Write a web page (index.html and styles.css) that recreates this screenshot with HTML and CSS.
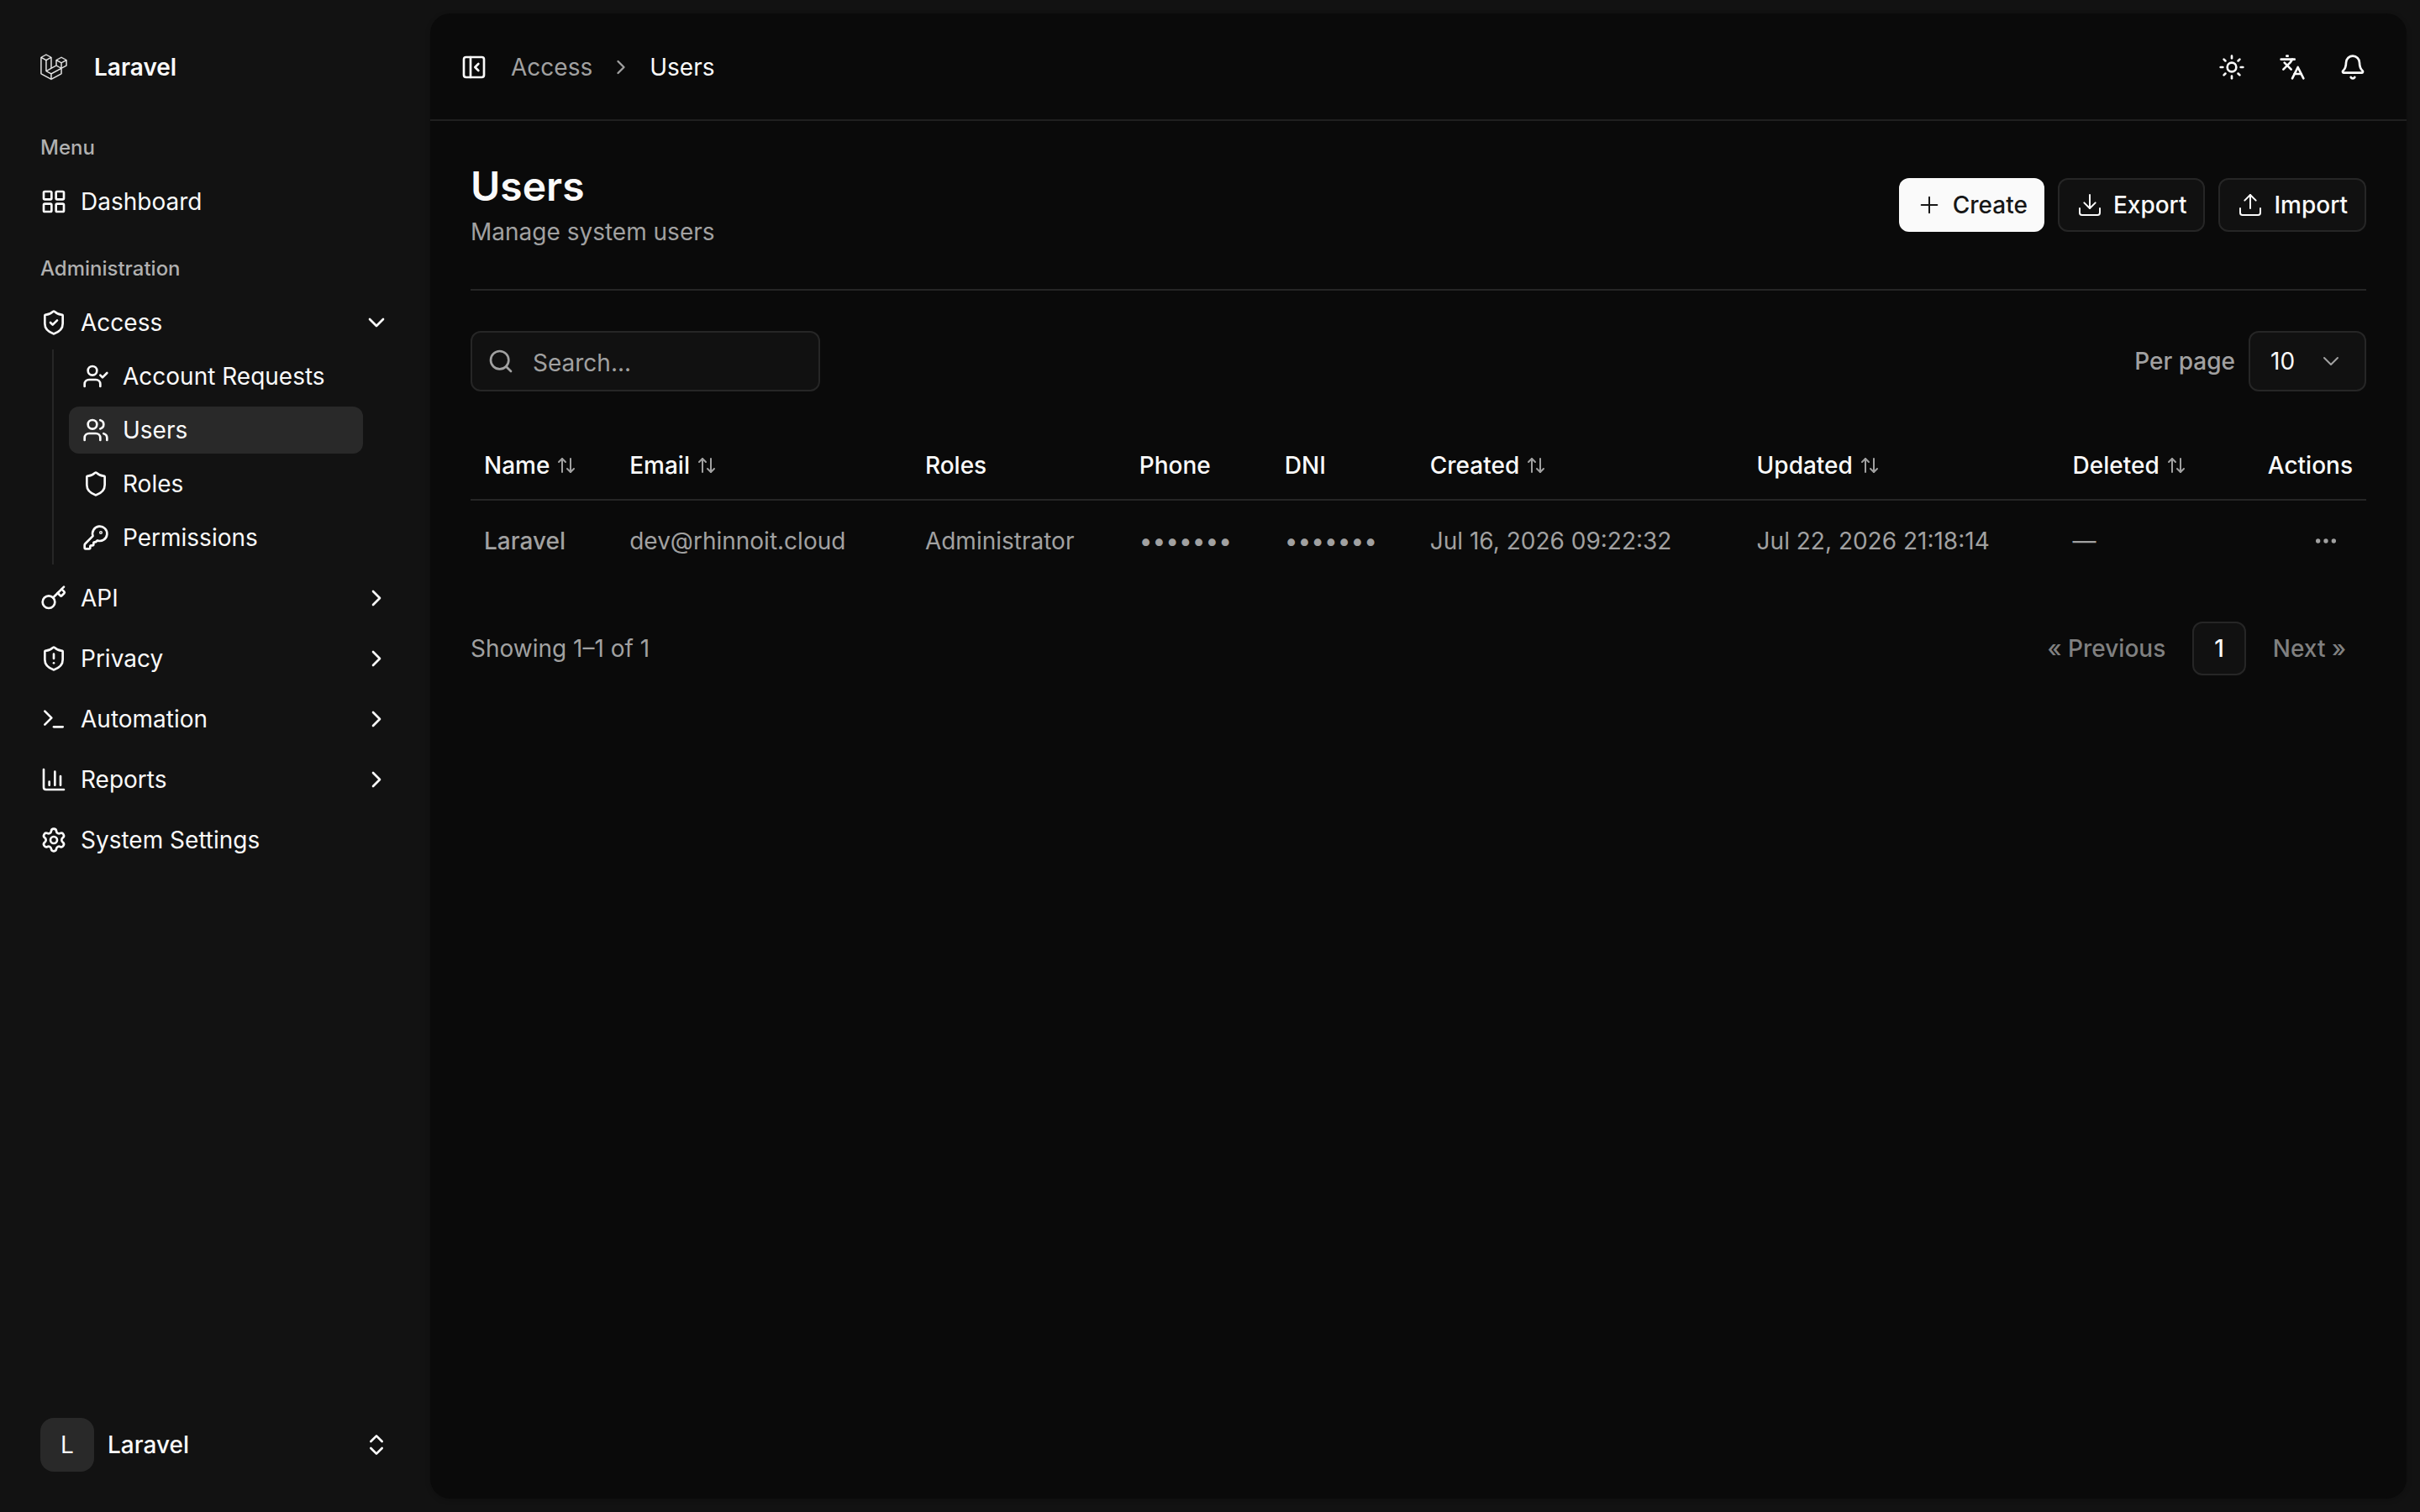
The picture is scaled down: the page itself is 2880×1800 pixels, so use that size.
FILE: index.html
```html
<!DOCTYPE html>
<html lang="en">
<head>
    <meta charset="UTF-8">
    <meta name="viewport" content="width=device-width, initial-scale=1.0">
    <title>Users</title>
    <link rel="stylesheet" href="styles.css">
</head>
<body>
    <!-- shared icons -->
    <svg class="sprite" aria-hidden="true">
        <symbol id="chevron-right" viewBox="0 0 24 24"><path d="m9 18 6-6-6-6"/></symbol>
        <symbol id="chevron-down" viewBox="0 0 24 24"><path d="m6 9 6 6 6-6"/></symbol>
        <symbol id="sort" viewBox="0 0 24 24"><path d="m21 16-4 4-4-4"/><path d="M17 20V4"/><path d="m3 8 4-4 4 4"/><path d="M7 4v16"/></symbol>
        <symbol id="shield" viewBox="0 0 24 24"><path d="M20 13c0 5-3.5 7.5-7.66 8.95a1 1 0 0 1-.67-.01C7.5 20.5 4 18 4 13V6a1 1 0 0 1 1-1c2 0 4.5-1.2 6.24-2.72a1.17 1.17 0 0 1 1.52 0C14.51 3.81 17 5 19 5a1 1 0 0 1 1 1z"/></symbol>
    </svg>

    <aside class="sidebar">
        <a href="#" class="brand">
            <svg class="logo" viewBox="-0.6 -1 50.9 54" preserveAspectRatio="none" aria-hidden="true"><path d="M49.626 11.564a.809.809 0 0 1 .028.209v10.972a.8.8 0 0 1-.402.694l-9.209 5.302V39.25c0 .286-.152.55-.4.694L20.42 51.01c-.044.025-.092.041-.14.058-.018.006-.035.017-.054.022a.805.805 0 0 1-.41 0c-.022-.006-.042-.018-.063-.026-.044-.016-.09-.03-.132-.054L.402 39.944A.801.801 0 0 1 0 39.25V6.334c0-.072.01-.142.028-.21.006-.023.02-.044.028-.067.015-.042.029-.085.051-.124.015-.026.037-.047.055-.071.023-.032.044-.065.071-.093.023-.023.053-.04.079-.06.029-.024.055-.05.088-.069h.001l9.61-5.533a.802.802 0 0 1 .8 0l9.61 5.533h.002c.032.02.059.045.088.068.026.02.055.038.078.06.028.029.048.062.072.094.017.024.04.045.054.071.023.04.036.082.052.124.008.023.022.044.028.068a.809.809 0 0 1 .028.209v20.559l8.008-4.611v-10.51c0-.07.01-.141.028-.208.007-.024.02-.045.028-.068.016-.042.03-.085.052-.124.015-.026.037-.047.054-.071.024-.032.044-.065.072-.093.023-.023.052-.04.078-.06.03-.024.056-.05.088-.069h.001l9.611-5.533a.801.801 0 0 1 .8 0l9.61 5.533c.034.02.06.045.09.068.025.02.054.038.077.06.028.029.048.062.072.094.018.024.04.045.054.071.023.039.036.082.052.124.009.023.022.044.028.068zm-1.574 10.718v-9.124l-3.363 1.936-4.646 2.675v9.124l8.01-4.611zm-9.61 16.505v-9.13l-4.57 2.61-13.05 7.448v9.216l17.62-10.144zM1.602 7.719v31.068L19.22 48.93v-9.214l-9.204-5.209-.003-.002-.004-.002c-.031-.018-.057-.044-.086-.066-.025-.02-.054-.036-.076-.058l-.002-.003c-.026-.025-.044-.056-.066-.084-.02-.027-.044-.05-.06-.078l-.001-.003c-.018-.03-.029-.066-.042-.1-.013-.03-.03-.058-.038-.09v-.001c-.01-.038-.012-.078-.016-.117-.004-.03-.012-.06-.012-.09v-.002-21.481L4.965 9.654 1.602 7.72zm8.81-5.994L2.405 6.334l8.005 4.609 8.006-4.61-8.006-4.608zm4.164 28.764l4.645-2.674V7.719l-3.363 1.936-4.646 2.675v20.096l3.364-1.937zM39.243 7.164l-8.006 4.609 8.006 4.609 8.005-4.61-8.005-4.608zm-.801 10.605l-4.646-2.675-3.363-1.936v9.124l4.645 2.674 3.364 1.937v-9.124zM20.02 38.33l11.743-6.704 5.87-3.35-8-4.606-9.211 5.303-8.395 4.833 7.993 4.524z"/></svg>
            <span>Laravel</span>
        </a>

        <nav class="nav">
            <div class="nav-group">
                <h2 class="nav-label">Menu</h2>
                <ul class="nav-list">
                    <li><a href="#" class="nav-item">
                        <svg class="icon" viewBox="0 0 24 24"><rect width="7" height="7" x="3" y="3" rx="1"/><rect width="7" height="7" x="14" y="3" rx="1"/><rect width="7" height="7" x="14" y="14" rx="1"/><rect width="7" height="7" x="3" y="14" rx="1"/></svg>
                        <span>Dashboard</span>
                    </a></li>
                </ul>
            </div>

            <div class="nav-group">
                <h2 class="nav-label">Administration</h2>
                <ul class="nav-list">
                    <li>
                        <button type="button" class="nav-item" aria-expanded="true">
                            <svg class="icon" viewBox="0 0 24 24"><use href="#shield"/><path d="m9 12 2 2 4-4"/></svg>
                            <span>Access</span>
                            <svg class="icon nav-arrow"><use href="#chevron-down"/></svg>
                        </button>
                        <ul class="subnav">
                            <li><a href="#" class="subnav-item">
                                <svg class="icon" viewBox="0 0 24 24"><path d="m16 11 2 2 4-4"/><path d="M16 21v-2a4 4 0 0 0-4-4H6a4 4 0 0 0-4 4v2"/><circle cx="9" cy="7" r="4"/></svg>
                                <span>Account Requests</span>
                            </a></li>
                            <li><a href="#" class="subnav-item active" aria-current="page">
                                <svg class="icon" viewBox="0 0 24 24"><path d="M16 21v-2a4 4 0 0 0-4-4H6a4 4 0 0 0-4 4v2"/><path d="M16 3.128a4 4 0 0 1 0 7.744"/><path d="M22 21v-2a4 4 0 0 0-3-3.87"/><circle cx="9" cy="7" r="4"/></svg>
                                <span>Users</span>
                            </a></li>
                            <li><a href="#" class="subnav-item">
                                <svg class="icon"><use href="#shield"/></svg>
                                <span>Roles</span>
                            </a></li>
                            <li><a href="#" class="subnav-item">
                                <svg class="icon" viewBox="0 0 24 24"><path d="M2.586 17.414A2 2 0 0 0 2 18.828V21a1 1 0 0 0 1 1h3a1 1 0 0 0 1-1v-1a1 1 0 0 1 1-1h1a1 1 0 0 0 1-1v-1a1 1 0 0 1 1-1h.172a2 2 0 0 0 1.414-.586l.814-.814a6.5 6.5 0 1 0-4-4z"/><circle cx="16.5" cy="7.5" r=".5"/></svg>
                                <span>Permissions</span>
                            </a></li>
                        </ul>
                    </li>
                    <li><button type="button" class="nav-item">
                        <svg class="icon" viewBox="0 0 24 24"><path d="m15.5 7.5 2.3 2.3a1 1 0 0 0 1.4 0l2.1-2.1a1 1 0 0 0 0-1.4L19 4"/><path d="m21 2-9.6 9.6"/><circle cx="7.5" cy="15.5" r="5.5"/></svg>
                        <span>API</span>
                        <svg class="icon nav-arrow"><use href="#chevron-right"/></svg>
                    </button></li>
                    <li><button type="button" class="nav-item">
                        <svg class="icon" viewBox="0 0 24 24"><use href="#shield"/><path d="M12 8v4"/><path d="M12 16h.01"/></svg>
                        <span>Privacy</span>
                        <svg class="icon nav-arrow"><use href="#chevron-right"/></svg>
                    </button></li>
                    <li><button type="button" class="nav-item">
                        <svg class="icon" viewBox="0 0 24 24"><path d="M12 19h8"/><path d="m4 17 6-6-6-6"/></svg>
                        <span>Automation</span>
                        <svg class="icon nav-arrow"><use href="#chevron-right"/></svg>
                    </button></li>
                    <li><button type="button" class="nav-item">
                        <svg class="icon" viewBox="0 0 24 24"><path d="M3 3v16a2 2 0 0 0 2 2h16"/><path d="M18 17V9"/><path d="M13 17V5"/><path d="M8 17v-3"/></svg>
                        <span>Reports</span>
                        <svg class="icon nav-arrow"><use href="#chevron-right"/></svg>
                    </button></li>
                    <li><a href="#" class="nav-item">
                        <svg class="icon" viewBox="0 0 24 24"><path d="M9.671 4.136a2.34 2.34 0 0 1 4.659 0 2.34 2.34 0 0 0 3.319 1.915 2.34 2.34 0 0 1 2.33 4.033 2.34 2.34 0 0 0 0 3.831 2.34 2.34 0 0 1-2.33 4.033 2.34 2.34 0 0 0-3.319 1.915 2.34 2.34 0 0 1-4.659 0 2.34 2.34 0 0 0-3.32-1.915 2.34 2.34 0 0 1-2.33-4.033 2.34 2.34 0 0 0 0-3.831A2.34 2.34 0 0 1 6.35 6.051a2.34 2.34 0 0 0 3.319-1.915"/><circle cx="12" cy="12" r="3"/></svg>
                        <span>System Settings</span>
                    </a></li>
                </ul>
            </div>
        </nav>

        <button type="button" class="account">
            <span class="avatar">L</span>
            <span>Laravel</span>
            <svg class="icon nav-arrow" viewBox="0 0 24 24"><path d="m7 15 5 5 5-5"/><path d="m7 9 5-5 5 5"/></svg>
        </button>
    </aside>

    <main class="panel">
        <header class="topbar">
            <button type="button" class="icon-button" aria-label="Toggle sidebar">
                <svg class="icon" viewBox="0 0 24 24"><rect width="18" height="18" x="3" y="3" rx="2"/><path d="M9 3v18"/><path d="m16 15-3-3 3-3"/></svg>
            </button>
            <nav class="breadcrumb" aria-label="Breadcrumb">
                <a href="#">Access</a>
                <svg class="icon"><use href="#chevron-right"/></svg>
                <span>Users</span>
            </nav>
            <div class="topbar-actions">
                <button type="button" class="icon-button" aria-label="Theme">
                    <svg class="icon" viewBox="0 0 24 24"><circle cx="12" cy="12" r="4"/><path d="M12 2v2"/><path d="M12 20v2"/><path d="m4.93 4.93 1.41 1.41"/><path d="m17.66 17.66 1.41 1.41"/><path d="M2 12h2"/><path d="M20 12h2"/><path d="m6.34 17.66-1.41 1.41"/><path d="m19.07 4.93-1.41 1.41"/></svg>
                </button>
                <button type="button" class="icon-button" aria-label="Language">
                    <svg class="icon" viewBox="0 0 24 24"><path d="m5 8 6 6"/><path d="m4 14 6-6 2-3"/><path d="M2 5h12"/><path d="M7 2h1"/><path d="m22 22-5-10-5 10"/><path d="M14 18h6"/></svg>
                </button>
                <button type="button" class="icon-button" aria-label="Notifications">
                    <svg class="icon" viewBox="0 0 24 24"><path d="M10.268 21a2 2 0 0 0 3.464 0"/><path d="M3.262 15.326A1 1 0 0 0 4 17h16a1 1 0 0 0 .74-1.673C19.41 13.956 18 12.499 18 8A6 6 0 0 0 6 8c0 4.499-1.411 5.956-2.738 7.326"/></svg>
                </button>
            </div>
        </header>

        <div class="content">
            <div class="page-header">
                <div>
                    <h1>Users</h1>
                    <p>Manage system users</p>
                </div>
                <div class="page-actions">
                    <button type="button" class="btn btn-primary">
                        <svg class="icon" viewBox="0 0 24 24"><path d="M5 12h14"/><path d="M12 5v14"/></svg>
                        Create
                    </button>
                    <button type="button" class="btn">
                        <svg class="icon" viewBox="0 0 24 24"><path d="M21 15v4a2 2 0 0 1-2 2H5a2 2 0 0 1-2-2v-4"/><path d="m7 10 5 5 5-5"/><path d="M12 15V3"/></svg>
                        Export
                    </button>
                    <button type="button" class="btn">
                        <svg class="icon" viewBox="0 0 24 24"><path d="M21 15v4a2 2 0 0 1-2 2H5a2 2 0 0 1-2-2v-4"/><path d="m17 8-5-5-5 5"/><path d="M12 3v12"/></svg>
                        Import
                    </button>
                </div>
            </div>

            <div class="toolbar">
                <div class="search">
                    <svg class="icon" viewBox="0 0 24 24"><circle cx="11" cy="11" r="8"/><path d="m21 21-4.34-4.34"/></svg>
                    <input type="text" placeholder="Search..." aria-label="Search">
                </div>
                <div class="per-page">
                    <label for="perPage">Per page</label>
                    <div class="select">
                        <select id="perPage">
                            <option>10</option>
                            <option>25</option>
                            <option>50</option>
                        </select>
                        <svg class="icon"><use href="#chevron-down"/></svg>
                    </div>
                </div>
            </div>

            <table class="table">
                <thead>
                    <tr>
                        <th><button type="button" class="sort">Name <svg class="icon"><use href="#sort"/></svg></button></th>
                        <th><button type="button" class="sort">Email <svg class="icon"><use href="#sort"/></svg></button></th>
                        <th>Roles</th>
                        <th>Phone</th>
                        <th>DNI</th>
                        <th><button type="button" class="sort">Created <svg class="icon"><use href="#sort"/></svg></button></th>
                        <th><button type="button" class="sort">Updated <svg class="icon"><use href="#sort"/></svg></button></th>
                        <th><button type="button" class="sort">Deleted <svg class="icon"><use href="#sort"/></svg></button></th>
                        <th class="actions">Actions</th>
                    </tr>
                </thead>
                <tbody>
                    <tr>
                        <td class="name">Laravel</td>
                        <td>dev@rhinnoit.cloud</td>
                        <td>Administrator</td>
                        <td>•••••••</td>
                        <td>•••••••</td>
                        <td>Jul 16, 2026 09:22:32</td>
                        <td>Jul 22, 2026 21:18:14</td>
                        <td>—</td>
                        <td class="actions">
                            <button type="button" class="icon-button" aria-label="Row actions">
                                <svg class="icon" viewBox="0 0 24 24"><circle cx="12" cy="12" r="1"/><circle cx="19" cy="12" r="1"/><circle cx="5" cy="12" r="1"/></svg>
                            </button>
                        </td>
                    </tr>
                </tbody>
            </table>

            <div class="table-footer">
                <p>Showing 1–1 of 1</p>
                <nav class="pagination" aria-label="Pagination">
                    <button type="button" disabled>« Previous</button>
                    <button type="button" class="current">1</button>
                    <button type="button" disabled>Next »</button>
                </nav>
            </div>
        </div>
    </main>
</body>
</html>
```
FILE: styles.css
```css
:root {
    --background: #0a0a0a;
    --sidebar: #121212;
    --surface: #111111;
    --accent: #292929;
    --border: #262626;
    --foreground: #fafafa;
    --muted: #a1a1a1;
}

* {
    box-sizing: border-box;
}

body {
    margin: 0;
    min-height: 100vh;
    display: flex;
    background-color: var(--sidebar);
    color: var(--foreground);
    font-family: Inter, "Liberation Sans", sans-serif;
    font-size: 28px;
    line-height: 40px;
    -webkit-font-smoothing: antialiased;
}

h1, h2, p, ul {
    margin: 0;
    padding: 0;
}

ul {
    list-style: none;
}

a {
    color: inherit;
    text-decoration: none;
}

button, input, select {
    font: inherit;
    color: inherit;
    background: none;
    border: none;
    margin: 0;
    padding: 0;
}

button {
    cursor: pointer;
}

.sprite {
    display: none;
}

.icon {
    width: 32px;
    height: 32px;
    flex-shrink: 0;
    fill: none;
    stroke: currentColor;
    stroke-width: 2;
    stroke-linecap: round;
    stroke-linejoin: round;
}

/* Sidebar */
.sidebar {
    width: 512px;
    flex-shrink: 0;
    padding: 32px;
    display: flex;
    flex-direction: column;
}

.brand {
    height: 96px;
    padding: 0 16px;
    display: flex;
    align-items: center;
    gap: 32px;
    font-weight: 600;
}

.logo {
    width: 32px;
    height: 32px;
    fill: currentColor;
    stroke: currentColor;
    stroke-width: 0.6;
}

.nav {
    flex: 1;
    padding-top: 16px;
    display: flex;
    flex-direction: column;
    gap: 16px;
}

.nav-label {
    height: 64px;
    padding: 0 16px;
    font-size: 24px;
    font-weight: 500;
    line-height: 64px;
    color: #b0b0b0;
}

.nav-list {
    display: flex;
    flex-direction: column;
    gap: 8px;
}

.nav-item {
    width: 100%;
    height: 64px;
    padding: 0 16px;
    border-radius: 12px;
    display: flex;
    align-items: center;
    gap: 16px;
}

.nav-arrow {
    margin-left: auto;
}

.subnav {
    margin: 0 48px 0 30px;
    padding: 4px 0 4px 18px;
    border-left: 2px solid var(--border);
    display: flex;
    flex-direction: column;
    gap: 8px;
}

.subnav-item {
    height: 56px;
    padding: 0 16px;
    border-radius: 12px;
    display: flex;
    align-items: center;
    gap: 16px;
}

.subnav-item.active {
    background-color: var(--accent);
}

.account {
    height: 96px;
    padding: 0 16px;
    display: flex;
    align-items: center;
    gap: 16px;
    font-weight: 500;
}

.avatar {
    width: 64px;
    height: 64px;
    border-radius: 16px;
    background-color: var(--accent);
    font-weight: 400;
    line-height: 64px;
    text-align: center;
}

/* Main panel */
.panel {
    flex: 1;
    min-width: 0;
    margin: 16px 16px 16px 0;
    border-radius: 24px;
    background-color: var(--background);
    box-shadow: 0 2px 6px rgba(0, 0, 0, 0.2);
}

.topbar {
    height: 128px;
    padding: 2px 32px 0 20px;
    border-bottom: 2px solid #202020;
    display: flex;
    align-items: center;
    gap: 12px;
}

.topbar-actions {
    margin-left: auto;
    display: flex;
    gap: 8px;
}

.icon-button {
    width: 64px;
    height: 64px;
    display: inline-flex;
    align-items: center;
    justify-content: center;
}

.breadcrumb {
    display: flex;
    align-items: center;
    gap: 20px;
}

.breadcrumb a {
    color: var(--muted);
}

.breadcrumb .icon {
    width: 28px;
    height: 28px;
    color: var(--muted);
}

.content {
    padding: 48px;
    display: flex;
    flex-direction: column;
    gap: 48px;
}

.page-header {
    padding-bottom: 48px;
    border-bottom: 2px solid var(--border);
    display: flex;
    align-items: center;
    justify-content: space-between;
}

.page-header h1 {
    margin-bottom: 4px;
    font-size: 48px;
    font-weight: 600;
    line-height: 60px;
}

.page-header p {
    color: var(--muted);
}

.page-actions {
    display: flex;
    gap: 16px;
}

.btn {
    height: 64px;
    padding: 0 20px;
    border: 2px solid var(--border);
    border-radius: 12px;
    background-color: var(--surface);
    display: flex;
    align-items: center;
    gap: 12px;
    font-weight: 500;
}

.btn .icon {
    stroke-width: 1.5;
}

.btn-primary {
    border: none;
    background-color: var(--foreground);
    color: #171717;
}

/* Search and page size */
.toolbar {
    display: flex;
    align-items: center;
    justify-content: space-between;
}

.search {
    width: 416px;
    height: 72px;
    padding: 0 18px;
    border: 2px solid var(--border);
    border-radius: 12px;
    background-color: var(--surface);
    color: var(--muted);
    display: flex;
    align-items: center;
    gap: 22px;
}

.search input {
    flex: 1;
    min-width: 0;
    padding-top: 4px;
    outline: none;
    color: var(--foreground);
}

.search input::placeholder {
    color: var(--muted);
    opacity: 1;
}

.per-page {
    display: flex;
    align-items: center;
    gap: 16px;
    color: var(--muted);
    font-weight: 500;
}

.select {
    position: relative;
    font-weight: 400;
}

.select select {
    width: 140px;
    height: 72px;
    padding: 0 24px;
    border: 2px solid var(--border);
    border-radius: 12px;
    background-color: var(--surface);
    color: var(--foreground);
    appearance: none;
}

.select .icon {
    position: absolute;
    top: 20px;
    right: 26px;
    stroke-width: 1.5;
    pointer-events: none;
}

/* Table */
.table {
    width: 100%;
    border-collapse: separate;
    border-spacing: 0;
    text-align: left;
    white-space: nowrap;
}

.table th {
    height: 82px;
    padding: 0 16px;
    border-bottom: 2px solid var(--border);
    font-weight: 500;
}

.table td {
    height: 96px;
    padding: 0 16px;
    color: var(--muted);
}

.table .name {
    font-weight: 500;
}

.table .actions {
    text-align: right;
}

.table .icon-button {
    vertical-align: middle;
}

.sort {
    display: flex;
    align-items: center;
    gap: 8px;
}

.sort .icon {
    width: 24px;
    height: 24px;
    color: var(--muted);
}

.table-footer {
    display: flex;
    align-items: center;
    justify-content: space-between;
    color: var(--muted);
}

.pagination {
    display: flex;
    gap: 8px;
}

.pagination button {
    height: 64px;
    padding: 0 24px;
    border-radius: 12px;
    font-weight: 500;
}

.pagination button:disabled {
    color: #808080;
}

.pagination .current {
    border: 2px solid var(--border);
    background-color: var(--surface);
    color: var(--foreground);
}
```
